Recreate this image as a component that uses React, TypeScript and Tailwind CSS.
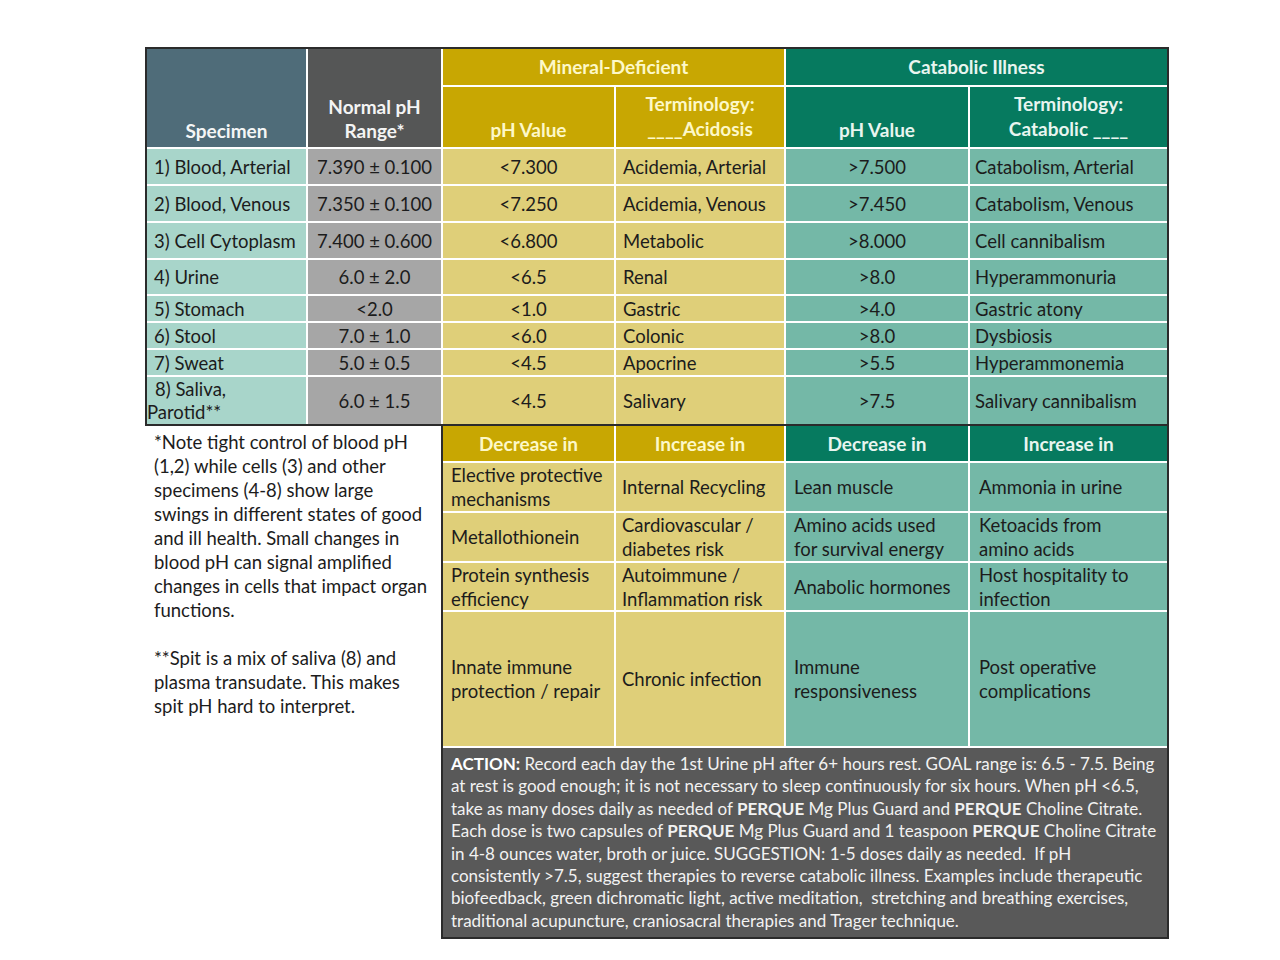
import React from 'react'

const FONT = { fontFamily: 'Lato, "Open Sans", sans-serif' }

type Row = [string, string, string, string, string, string]

const ROWS: Row[] = [
  ['1) Blood, Arterial', '7.390 ± 0.100', '<7.300', 'Acidemia, Arterial', '>7.500', 'Catabolism, Arterial'],
  ['2) Blood, Venous', '7.350 ± 0.100', '<7.250', 'Acidemia, Venous', '>7.450', 'Catabolism, Venous'],
  ['3) Cell Cytoplasm', '7.400 ± 0.600', '<6.800', 'Metabolic', '>8.000', 'Cell cannibalism'],
  ['4) Urine', '6.0 ± 2.0', '<6.5', 'Renal', '>8.0', 'Hyperammonuria'],
  ['5) Stomach', '<2.0', '<1.0', 'Gastric', '>4.0', 'Gastric atony'],
  ['6) Stool', '7.0 ± 1.0', '<6.0', 'Colonic', '>8.0', 'Dysbiosis'],
  ['7) Sweat', '5.0 ± 0.5', '<4.5', 'Apocrine', '>5.5', 'Hyperammonemia'],
]

const EFFECTS: [string[], string[], string[], string[]][] = [
  [['Elective protective', 'mechanisms'], ['Internal Recycling'], ['Lean muscle'], ['Ammonia in urine']],
  [['Metallothionein'], ['Cardiovascular /', 'diabetes risk'], ['Amino acids used', 'for survival energy'], ['Ketoacids from', 'amino acids']],
  [['Protein synthesis', 'efficiency'], ['Autoimmune /', 'Inflammation risk'], ['Anabolic hormones'], ['Host hospitality to', 'infection']],
  [['Innate immune', 'protection / repair'], ['Chronic infection'], ['Immune', 'responsiveness'], ['Post operative', 'complications']],
]

const NOTE = [
  '*Note tight control of blood pH',
  '(1,2) while cells (3) and other',
  'specimens (4-8) show large',
  'swings in different states of good',
  'and ill health. Small changes in',
  'blood pH can signal amplified',
  'changes in cells that impact organ',
  'functions.',
]

const NOTE2 = ['**Spit is a mix of saliva (8) and', 'plasma transudate. This makes', 'spit pH hard to interpret.']

function Lines({ lines }: { lines: string[] }) {
  return <>{lines.map((l, i) => <div key={i} className="whitespace-nowrap">{l}</div>)}</>
}

export default function App() {
  return (
    <div className="min-h-[960px] bg-white pt-[47px] pl-[145px] text-[#1c1c1c]" style={FONT}>
      <div className="w-[1024px]">
        {/* upper table */}
        <div className="border-2 border-[#2b2b2b] bg-white">
          <div className="grid grid-cols-[159px_133px_171px_168px_182px_197px] grid-rows-[36px_60px_35px_35px_35px_34px_25px_25px_25px_47px] gap-[2px] text-[18.5px] leading-[22px]">
            <div className="row-span-2 bg-[#4f6c79] text-[#f4f6f6] text-[19px] font-bold flex items-end justify-center pb-[4px] leading-[24px]">Specimen</div>
            <div className="row-span-2 bg-[#555656] text-[#f4f4f4] text-[19px] font-bold flex flex-col items-center justify-end pb-[4px] leading-[24px]">
              <div>Normal pH</div>
              <div>Range*</div>
            </div>
            <div className="col-span-2 bg-[#c8a702] text-[#fdf8c8] text-[19px] font-bold flex items-center justify-center">Mineral-Deficient</div>
            <div className="col-span-2 bg-[#067a5f] text-[#e8f5ef] text-[19px] font-bold flex items-center justify-center">Catabolic Illness</div>

            <div className="bg-[#c8a702] text-[#fdf8c8] text-[19px] font-bold flex items-end justify-center pb-[6px]">pH Value</div>
            <div className="bg-[#c8a702] text-[#fdf8c8] text-[19px] font-bold flex flex-col items-center justify-end pb-[6px] leading-[25px]">
              <div>Terminology:</div>
              <div>____Acidosis</div>
            </div>
            <div className="bg-[#067a5f] text-[#e8f5ef] text-[19px] font-bold flex items-end justify-center pb-[6px]">pH Value</div>
            <div className="bg-[#067a5f] text-[#e8f5ef] text-[19px] font-bold flex flex-col items-center justify-end pb-[6px] leading-[25px]">
              <div>Terminology:</div>
              <div>Catabolic ____</div>
            </div>

            {ROWS.map((r, i) => (
              <React.Fragment key={i}>
                <div className="bg-[#a8d5ca] flex items-center pl-[7px] whitespace-nowrap">{r[0]}</div>
                <div className="bg-[#a6a6a6] flex items-center justify-center whitespace-nowrap">{r[1]}</div>
                <div className="bg-[#dfcf79] flex items-center justify-center">{r[2]}</div>
                <div className="bg-[#dfcf79] flex items-center pl-[7px] whitespace-nowrap">{r[3]}</div>
                <div className="bg-[#74b8a7] flex items-center justify-center">{r[4]}</div>
                <div className="bg-[#74b8a7] flex items-center pl-[5px] whitespace-nowrap">{r[5]}</div>
              </React.Fragment>
            ))}

            <div className="bg-[#a8d5ca] flex flex-col justify-center leading-[23px]">
              <div className="pl-[8px]">8) Saliva,</div>
              <div className="pl-0">Parotid**</div>
            </div>
            <div className="bg-[#a6a6a6] flex items-center justify-center">6.0 ± 1.5</div>
            <div className="bg-[#dfcf79] flex items-center justify-center">&lt;4.5</div>
            <div className="bg-[#dfcf79] flex items-center pl-[7px]">Salivary</div>
            <div className="bg-[#74b8a7] flex items-center justify-center">&gt;7.5</div>
            <div className="bg-[#74b8a7] flex items-center pl-[5px]">Salivary cannibalism</div>
          </div>
        </div>

        {/* lower section */}
        <div className="flex">
          <div className="w-[296px] pl-[9px] pt-[4px] text-[18.5px] leading-[24px]">
            <Lines lines={NOTE} />
            <div className="h-[24px]" />
            <Lines lines={NOTE2} />
          </div>

          <div className="border-x-2 border-b-2 border-[#2b2b2b] bg-white">
            <div className="grid grid-cols-[171px_168px_182px_197px] grid-rows-[35px_48px_48px_47px_134px_189px] gap-[2px] text-[18.5px] leading-[24px]">
              <div className="bg-[#c8a702] text-[#fdf8c8] text-[19px] font-bold flex items-center justify-center">Decrease in</div>
              <div className="bg-[#c8a702] text-[#fdf8c8] text-[19px] font-bold flex items-center justify-center">Increase in</div>
              <div className="bg-[#067a5f] text-[#e8f5ef] text-[19px] font-bold flex items-center justify-center">Decrease in</div>
              <div className="bg-[#067a5f] text-[#e8f5ef] text-[19px] font-bold flex items-center justify-center">Increase in</div>

              {EFFECTS.map((r, i) => (
                <React.Fragment key={i}>
                  <div className="bg-[#dfcf79] flex flex-col justify-center pl-[8px]"><Lines lines={r[0]} /></div>
                  <div className="bg-[#dfcf79] flex flex-col justify-center pl-[6px]"><Lines lines={r[1]} /></div>
                  <div className="bg-[#74b8a7] flex flex-col justify-center pl-[8px]"><Lines lines={r[2]} /></div>
                  <div className="bg-[#74b8a7] flex flex-col justify-center pl-[9px]"><Lines lines={r[3]} /></div>
                </React.Fragment>
              ))}

              <div className="col-span-4 bg-[#595959] text-[#f2f2f2] pl-[8px] pt-[5px] text-[17px] leading-[22.4px] whitespace-nowrap">
                <div><b className="text-white">ACTION:</b> Record each day the 1st Urine pH after 6+ hours rest. GOAL range is: 6.5 - 7.5. Being</div>
                <div>at rest is good enough; it is not necessary to sleep continuously for six hours. When pH &lt;6.5,</div>
                <div>take as many doses daily as needed of <b>PERQUE</b> Mg Plus Guard and <b>PERQUE</b> Choline Citrate.</div>
                <div>Each dose is two capsules of <b>PERQUE</b> Mg Plus Guard and 1 teaspoon <b>PERQUE</b> Choline Citrate</div>
                <div>in 4-8 ounces water, broth or juice. SUGGESTION: 1-5 doses daily as needed.&nbsp; If pH</div>
                <div>consistently &gt;7.5, suggest therapies to reverse catabolic illness. Examples include therapeutic</div>
                <div>biofeedback, green dichromatic light, active meditation,&nbsp; stretching and breathing exercises,</div>
                <div>traditional acupuncture, craniosacral therapies and Trager technique.</div>
              </div>
            </div>
          </div>
        </div>
      </div>
    </div>
  )
}
